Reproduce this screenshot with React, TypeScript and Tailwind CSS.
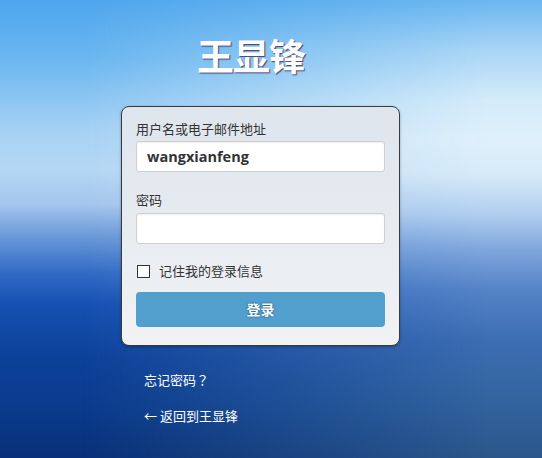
import React from "react";

export default function App() {
  return (
    <div className="relative h-[458px] w-full overflow-hidden font-['Open_Sans','Noto_Sans_CJK_SC',sans-serif] bg-[linear-gradient(to_bottom,#4ea6ee_0px,#6bb7f0_60px,#a6d1f4_130px,#b4d7f4_170px,#a4c5ec_205px,#6d9ad9_235px,#2f68c4_275px,#1650b2_305px,#0c4199_360px,#0a3a8c_410px,#083178_458px)]">
      <div className="absolute inset-0 [mask-image:linear-gradient(to_right,transparent_15%,black_90%)] bg-[linear-gradient(to_bottom,#6ab6f0_0px,#a9d5f5_50px,#d4ebfa_100px,#dff0fb_140px,#d6eaf8_175px,#b0cdef_215px,#7fa6dc_250px,#5583c6_290px,#3d6db2_340px,#33649f_400px,#2b568a_458px)]" />
      <div className="relative flex flex-col items-center pr-[21px]">
        <h1 className="mt-[33px] ml-[-19px] text-[37px] leading-[48px] font-bold text-white [text-shadow:1px_1px_1px_rgba(60,20,60,0.75)] tracking-[-1px]">
          王显锋
        </h1>
        <div className="mt-[25px] w-[279px] rounded-[8px] border border-[#3a3a3a] bg-[linear-gradient(to_bottom,#dee5ed,#f1f2f4)] px-[14px] pt-[12px] pb-[18px] text-[#333] shadow-[0_1px_3px_rgba(0,0,0,0.3)]">
          <label className="block text-[13px] leading-[20px]">用户名或电子邮件地址</label>
          <div className="mt-[2px] flex h-[31px] items-center rounded-[3px] border border-[#cfcfcf] bg-white px-[10px] text-[14.5px] font-bold text-[#333] shadow-[inset_0_1px_2px_rgba(0,0,0,0.07)]">
            wangxianfeng
          </div>
          <label className="mt-[18px] block text-[13px] leading-[20px]">密码</label>
          <div className="mt-[3px] h-[31px] rounded-[3px] border border-[#cfcfcf] bg-white shadow-[inset_0_1px_2px_rgba(0,0,0,0.07)]" />
          <div className="mt-[19px] flex items-center">
            <span className="ml-[1px] h-[13px] w-[13px] border border-[#333] bg-white" />
            <span className="ml-[9px] text-[13px] leading-[16px]">记住我的登录信息</span>
          </div>
          <button className="mt-[13px] flex h-[35px] w-full items-center justify-center rounded-[4px] bg-[#519fcd] text-[14px] font-bold text-white [text-shadow:0_0_2px_rgba(0,40,80,0.8)]">
            登录
          </button>
        </div>
        <div className="mt-[24px] w-[279px] pl-[23px] text-[13px] text-white font-['Noto_Sans_CJK_SC',sans-serif]">
          <div className="leading-[20px]">
            忘记密码<span className="font-['Noto_Sans_CJK_TC',sans-serif]">？</span>
          </div>
          <div className="mt-[16px] leading-[20px]">← 返回到王显锋</div>
        </div>
      </div>
    </div>
  );
}
